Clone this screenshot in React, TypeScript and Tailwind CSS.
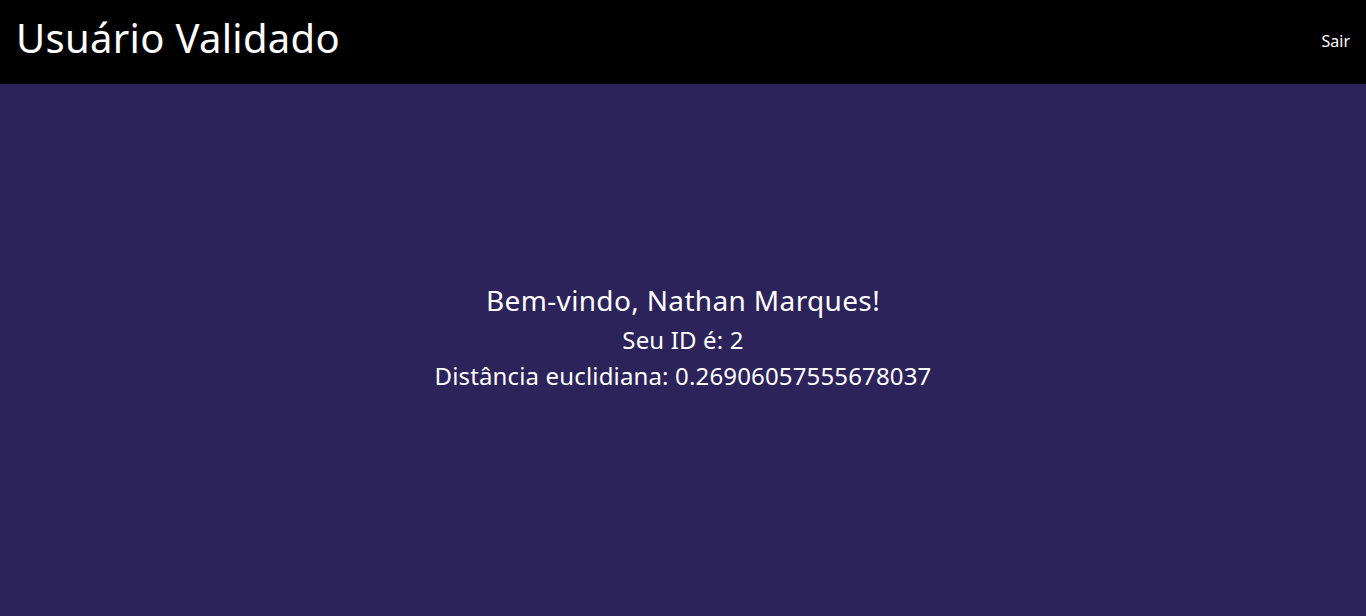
import React from 'react';

const App = () => {
    return (
        <div className="min-h-screen h-[616px] flex flex-col bg-[#2c235a] text-white font-['Noto_Sans',sans-serif]">
            <header className="h-[84px] bg-black flex items-center justify-between pl-[16px] pr-[16px] shrink-0">
                <h1 className="text-[40px] leading-none pb-[8px] tracking-[0.3px]">Usuário Validado</h1>
                <button className="text-[16px] text-white pb-[2px]">Sair</button>
            </header>
            <main className="flex-1 flex flex-col items-center justify-center text-center pb-[28px]">
                <h2 className="text-[28px] leading-[44px] tracking-[0.35px]">Bem-vindo, Nathan Marques!</h2>
                <p className="text-[24px] leading-[36px] tracking-[0.15px]">Seu ID é: 2</p>
                <p className="text-[24px] leading-[36px] tracking-[0.15px]">Distância euclidiana: 0.26906057555678037</p>
            </main>
        </div>
    );
};

export default App;
